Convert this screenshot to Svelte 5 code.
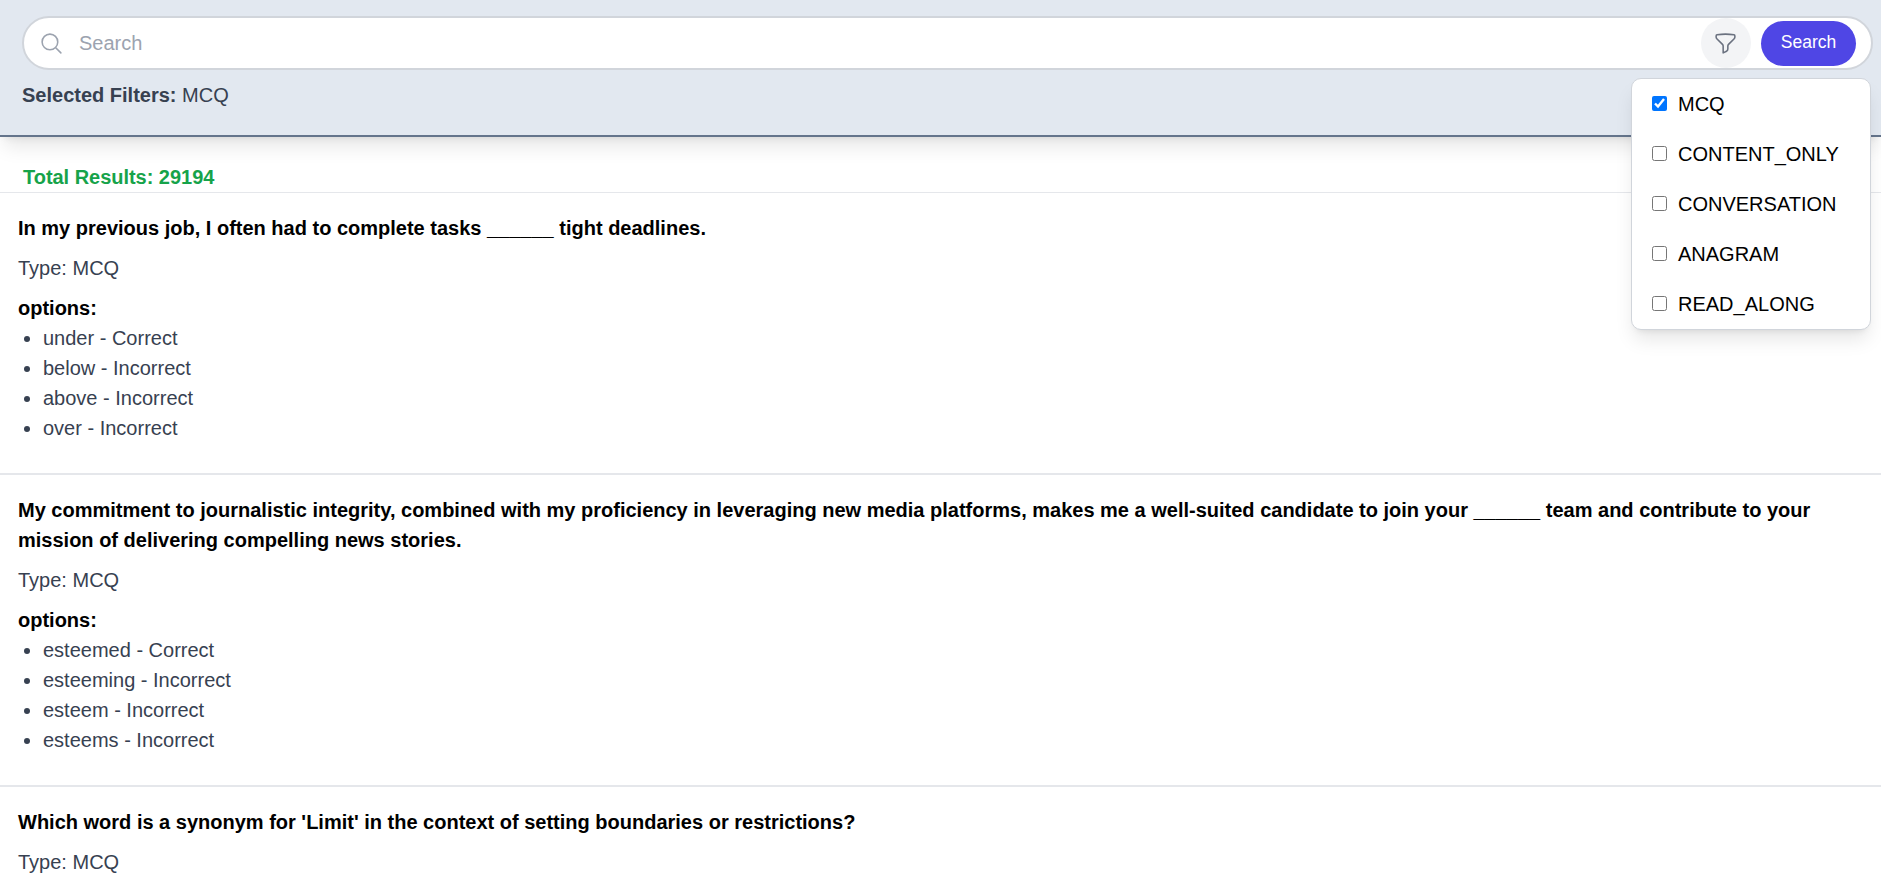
<script>
  const filters = $state([
    { name: 'MCQ', checked: true },
    { name: 'CONTENT_ONLY', checked: false },
    { name: 'CONVERSATION', checked: false },
    { name: 'ANAGRAM', checked: false },
    { name: 'READ_ALONG', checked: false }
  ]);
  const selected = $derived(filters.filter((f) => f.checked).map((f) => f.name).join(', '));

  const questions = [
    {
      title: 'In my previous job, I often had to complete tasks ______ tight deadlines.',
      options: ['under - Correct', 'below - Incorrect', 'above - Incorrect', 'over - Incorrect']
    },
    {
      title:
        'My commitment to journalistic integrity, combined with my proficiency in leveraging new media platforms, makes me a well-suited candidate to join your ______ team and contribute to your mission of delivering compelling news stories.',
      options: ['esteemed - Correct', 'esteeming - Incorrect', 'esteem - Incorrect', 'esteems - Incorrect']
    },
    {
      title: "Which word is a synonym for 'Limit' in the context of setting boundaries or restrictions?",
      options: []
    }
  ];
</script>

<div class="page">
  <header>
    <div class="search">
      <svg class="glass" viewBox="0 0 24 24" fill="none" stroke="currentColor" stroke-width="1.5" stroke-linecap="round" stroke-linejoin="round">
        <path d="M21 21l-5.197-5.197m0 0A7.5 7.5 0 105.196 5.196a7.5 7.5 0 0010.607 10.607z" />
      </svg>
      <input class="query" type="text" placeholder="Search" />
      <button class="filter" aria-label="Filter">
        <svg viewBox="0 0 24 24" fill="none" stroke="currentColor" stroke-width="1.5" stroke-linecap="round" stroke-linejoin="round">
          <path d="M12 3c2.755 0 5.455.232 8.083.678.533.09.917.556.917 1.096v1.044a2.25 2.25 0 01-.659 1.591l-5.432 5.432a2.25 2.25 0 00-.659 1.591v2.927a2.25 2.25 0 01-1.244 2.013L9.75 21v-6.568a2.25 2.25 0 00-.659-1.591L3.659 7.409A2.25 2.25 0 013 5.818V4.774c0-.54.384-1.006.917-1.096A48.32 48.32 0 0112 3z" />
        </svg>
      </button>
      <button class="submit">Search</button>
    </div>
    <p class="selected"><strong>Selected Filters:</strong> {selected}</p>
    <div class="menu">
      {#each filters as f}
        <label><input type="checkbox" bind:checked={f.checked} /><span>{f.name}</span></label>
      {/each}
    </div>
  </header>

  <main>
    <h2 class="total">Total Results: 29194</h2>
    {#each questions as q}
      <article>
        <h3>{q.title}</h3>
        <p class="type">Type: MCQ</p>
        {#if q.options.length}
          <h4>options:</h4>
          <ul>
            {#each q.options as o}<li>{o}</li>{/each}
          </ul>
        {/if}
      </article>
    {/each}
  </main>
</div>

<style>
  :global(body) {
    margin: 0;
    background: #fff;
  }
  .page,
  .page * {
    box-sizing: border-box;
  }
  .page {
    height: 876px;
    overflow: hidden;
    font: 20px/30px 'Liberation Sans', Arial, sans-serif;
    color: #000;
  }
  h2, h3, h4, p, ul {
    margin: 0;
    padding: 0;
    font-size: 20px;
  }
  header {
    position: relative;
    z-index: 1;
    height: 137px;
    padding: 16px 8px 0 22px;
    background: #e2e8f0;
    border-bottom: 2px solid #64748b;
    box-shadow: 0 12.5px 18.75px -3.75px rgba(0, 0, 0, 0.1), 0 5px 7.5px -5px rgba(0, 0, 0, 0.1);
  }
  .search {
    display: flex;
    align-items: center;
    height: 54px;
    padding: 0 15px;
    background: #fff;
    border: 2px solid #d1d5db;
    border-radius: 27px;
  }
  svg {
    display: block;
    width: 25px;
    height: 25px;
    flex: none;
  }
  .glass {
    color: #9ca3af;
  }
  .query {
    flex: 1;
    min-width: 0;
    height: 40px;
    margin-left: 15px;
    padding: 0;
    border: 0;
    outline: 0;
    background: transparent;
    font: inherit;
  }
  .query::placeholder {
    color: #9ca3af;
    opacity: 1;
  }
  button {
    border: 0;
    padding: 0;
    font-family: inherit;
  }
  .filter {
    display: flex;
    align-items: center;
    width: 50px;
    height: 50px;
    margin-right: 10px;
    padding-left: 12px;
    border-radius: 50%;
    background: #f3f4f6;
    color: #6b7280;
  }
  .submit {
    width: 95px;
    height: 45px;
    padding-bottom: 1px;
    border-radius: 23px;
    background: #4f46e5;
    color: #fff;
    font-size: 17.5px;
    line-height: 25px;
  }
  .selected {
    padding-top: 10px;
    color: #374151;
  }
  .menu {
    position: absolute;
    top: 78px;
    right: 10px;
    width: 240px;
    height: 252px;
    background: #fff;
    border: 1px solid #d1d5db;
    border-radius: 10px;
    box-shadow: 0 12.5px 18.75px -3.75px rgba(0, 0, 0, 0.1), 0 5px 7.5px -5px rgba(0, 0, 0, 0.1);
  }
  label {
    display: flex;
    align-items: center;
    height: 50px;
    padding: 0 20px 2px;
  }
  label span {
    padding-top: 2px;
  }
  label input {
    width: 15px;
    height: 15px;
    margin: 0 11px 0 0;
  }
  .total {
    height: 56px;
    padding: 25px 23px 0;
    border-bottom: 1px solid #e5e7eb;
    color: #16a34a;
    letter-spacing: -0.03px;
  }
  article {
    padding: 20px 18px 30px;
    border-bottom: 2px solid #e5e7eb;
  }
  .type {
    margin: 10px 0;
    color: #374151;
  }
  ul {
    padding-left: 25px;
    list-style: disc;
    color: #374151;
  }
</style>
